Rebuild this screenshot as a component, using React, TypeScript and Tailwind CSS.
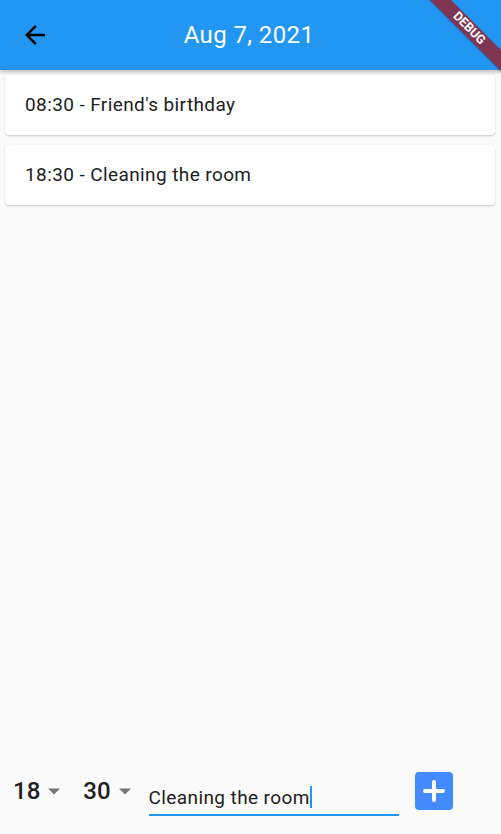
const EVENTS = ["08:30 - Friend's birthday", "18:30 - Cleaning the room"];

function DropArrow() {
  return (
    <svg width="14" height="8" viewBox="0 0 14 8" className="ml-[7px]">
      <path d="M1 1.5 L7 7.5 L13 1.5 Z" fill="#757575" />
    </svg>
  );
}

export default function App() {
  return (
    <div
      className="relative w-[501px] h-[834px] overflow-hidden bg-[#fafafa] flex flex-col"
      style={{ fontFamily: "Roboto, 'Noto Sans', sans-serif" }}
    >
      {/* APP BAR */}
      <header className="h-[70px] shrink-0 bg-[#2196f3] flex items-center shadow-[0_2px_4px_rgba(0,0,0,0.25)] z-10">
        <div className="w-[70px] flex items-center justify-center">
          <svg width="30" height="30" viewBox="0 0 24 24">
            <path
              d="M20 11H7.83l5.59-5.59L12 4l-8 8 8 8 1.41-1.41L7.83 13H20v-2z"
              fill="#000"
            />
          </svg>
        </div>
        <h1 className="flex-1 text-center text-white text-[24px] tracking-[0.4px] leading-none mr-[73px] -mt-[1px]">
          Aug 7, 2021
        </h1>
      </header>

      {/* DEBUG banner */}
      <div className="absolute left-[409px] top-[21px] w-[120px] h-[15px] rotate-45 bg-[#803652] flex items-center justify-center z-20 shadow-[0_1px_2px_rgba(0,0,0,0.2)]">
        <span className="text-white text-[12.5px] font-bold leading-none">DEBUG</span>
      </div>

      {/* LIST */}
      <main className="flex flex-col gap-[10px] pl-[5px] pr-[6px] pt-[5px]">
        {EVENTS.map((e) => (
          <div
            key={e}
            className="h-[60px] bg-white rounded-[4px] shadow-[0_1px_2px_rgba(0,0,0,0.2)] flex items-center pl-[20px]"
          >
            <span className="text-[19px] tracking-[0.4px] text-[#212121]">{e}</span>
          </div>
        ))}
      </main>

      <div className="flex-1" />

      {/* INPUT ROW */}
      <div className="h-[62px] mb-[12px] flex items-center pl-[13px]">
        <div className="flex items-center">
          <span className="text-[24px] font-medium text-[#212121] leading-none">18</span>
          <DropArrow />
        </div>
        <div className="flex items-center ml-[22px]">
          <span className="text-[24px] font-medium text-[#212121] leading-none">30</span>
          <DropArrow />
        </div>
        <div className="ml-[17px] w-[250px] mt-[14px] border-b-2 border-[#2196f3] h-[36px] flex items-center">
          <span className="text-[19px] tracking-[0.4px] text-[#212121] leading-none">Cleaning the room</span>
          <span className="w-[2px] h-[22px] bg-[#2196f3]" />
        </div>
        <button className="ml-[16px] w-[38px] h-[38px] rounded-[4px] bg-[#448aff] flex items-center justify-center">
          <svg width="22" height="22" viewBox="0 0 22 22">
            <path d="M11 2v18M2 11h18" stroke="#fff" strokeWidth="4" strokeLinecap="round" />
          </svg>
        </button>
      </div>
    </div>
  );
}
